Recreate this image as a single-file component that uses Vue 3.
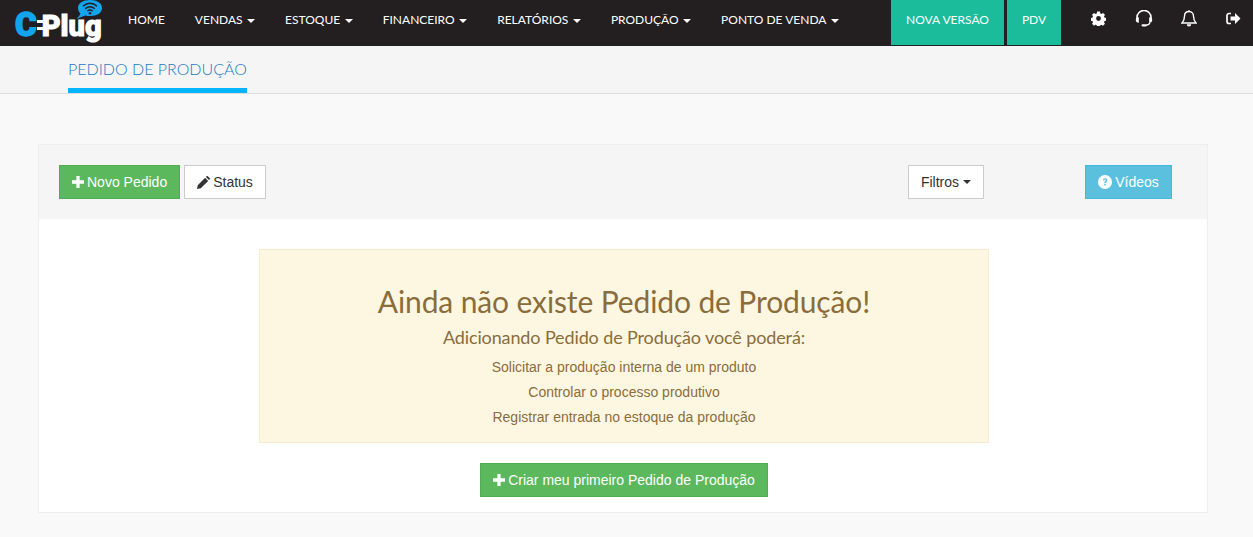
<template>
  <div class="page">
    <header class="topbar">
      <a class="logo">
        <span class="logo-c">C</span><span class="logo-dash"><i></i><i></i></span><span class="logo-plug">Plug</span>
        <svg class="logo-wifi" viewBox="0 0 30 20" width="30" height="20">
          <path d="M16 0c7 0 12 3 12 8s-5 8-12 8c-1.800 0-3.400-.2-4.800-.6L2 19c2.200-1.500 3.600-3.200 4.400-5.500C5 12.200 4 10.300 4 8c0-5 5-8 12-8z" fill="#12a5ee" />
          <path d="M9 6.200c4.200-3.800 10-3.800 14 0M11.200 8.800c2.900-2.500 6.700-2.500 9.600 0M13.300 11c1.700-1.300 3.700-1.300 5.400 0" fill="none" stroke="#231f20" stroke-width="1.500" />
          <circle cx="16" cy="13.200" r="1.300" fill="#231f20" />
        </svg>
      </a>
      <nav class="menu">
        <a v-for="item in menu" :key="item.label" class="menu-item">
          {{ item.label }}<span v-if="item.caret" class="caret"></span>
        </a>
      </nav>
      <a class="teal teal-wide">NOVA VERSÃO</a>
      <a class="teal teal-small">PDV</a>
      <div class="tools">
        <svg width="15" height="15" viewBox="0 0 16 16">
          <path fill="#fff" fill-rule="evenodd" d="M6.500.6h3l.4 2 1.200.5 1.700-1.100 2.100 2.100-1.100 1.700.5 1.200 2 .4v3l-2 .4-.5 1.200 1.100 1.700-2.100 2.100-1.700-1.100-1.200.5-.4 2h-3l-.4-2-1.200-.5-1.700 1.100-2.100-2.100 1.100-1.700-.5-1.200-2-.4v-3l2-.4.5-1.200L1.100 4.100l2.100-2.100 1.700 1.100 1.200-.5zM8 5.400a2.600 2.600 0 1 0 0 5.200 2.600 2.600 0 0 0 0-5.200z" />
        </svg>
        <svg width="18" height="17" viewBox="0 0 18 17">
          <path d="M2 9V7.500a7 7 0 0 1 14 0V9" fill="none" stroke="#fff" stroke-width="1.600" />
          <path d="M3.800 7.200C1.600 7.200.8 8.400.8 10s.8 2.800 3 2.800z" fill="#fff" />
          <path d="M14.200 7.200c2.200 0 3 1.200 3 2.800s-.8 2.800-3 2.800z" fill="#fff" />
          <path d="M15 12.500c-.4 1.600-1.800 2.500-4 2.700" fill="none" stroke="#fff" stroke-width="1.100" />
          <rect x="6.500" y="14.200" width="5.500" height="2.200" rx="1.100" fill="#fff" />
        </svg>
        <svg width="16" height="17" viewBox="0 0 16 17">
          <path d="M8 1.500c2.900 0 4.500 2 4.500 4.800 0 3.500 1 5 2.500 6.700H1c1.500-1.700 2.500-3.200 2.500-6.700C3.500 3.500 5.100 1.500 8 1.500z" fill="none" stroke="#fff" stroke-width="1.400" />
          <circle cx="8" cy="1.300" r="1" fill="#fff" />
          <path d="M5.800 14.200a2.200 2.200 0 0 0 4.400 0z" fill="#fff" />
        </svg>
        <svg width="15" height="13" viewBox="0 0 15 13">
          <path d="M5 1.500H3A2 2 0 0 0 1 3.500v6a2 2 0 0 0 2 2h2" fill="none" stroke="#fff" stroke-width="1.700" />
          <path d="M4.500 4.500H9V1l5.500 5.500L9 12V8.500H4.500z" fill="#fff" />
        </svg>
      </div>
    </header>

    <div class="subnav">
      <a class="tab">PEDIDO DE PRODUÇÃO</a>
    </div>

    <main class="content">
      <section class="panel">
        <div class="panel-head">
          <div class="group">
            <button class="btn btn-green">
              <svg class="ico" width="12" height="12" viewBox="0 0 11 11"><path d="M4 0h3v4h4v3H7v4H4V7H0V4h4z" fill="#fff" /></svg>
              Novo Pedido
            </button>
            <button class="btn btn-white">
              <svg class="ico" width="13" height="13" viewBox="0 0 12 12"><path d="M0 12l.7-3.500 6.800-6.800 2.800 2.800-6.800 6.800zM8.200 1L9 .2c.3-.3.700-.3 1 0l1.800 1.800c.3.300.3.700 0 1l-.8.800z" fill="#333" /></svg>
              Status
            </button>
          </div>
          <button class="btn btn-white filtros">Filtros <span class="caret dark"></span></button>
          <button class="btn btn-blue">
            <svg class="ico" width="14" height="14" viewBox="0 0 14 14">
              <circle cx="7" cy="7" r="7" fill="#fff" />
              <path d="M4.700 5.300C4.900 4 5.800 3.300 7.100 3.300c1.400 0 2.300.8 2.300 1.900 0 1.800-1.700 1.700-1.700 3.100H6.200c0-2.200 1.600-2 1.600-3 0-.4-.3-.7-.8-.7-.5 0-.8.300-.9.900zM6.200 9h1.500v1.600H6.200z" fill="#5bc0de" />
            </svg>
            Vídeos
          </button>
        </div>
        <div class="panel-body">
          <div class="notice">
            <h2>Ainda não existe Pedido de Produção!</h2>
            <h3>Adicionando Pedido de Produção você poderá:</h3>
            <p v-for="line in lines" :key="line">{{ line }}</p>
          </div>
          <button class="btn btn-green btn-create">
            <svg class="ico" width="12" height="12" viewBox="0 0 11 11"><path d="M4 0h3v4h4v3H7v4H4V7H0V4h4z" fill="#fff" /></svg>
            Criar meu primeiro Pedido de Produção
          </button>
        </div>
      </section>
    </main>
  </div>
</template>

<script setup>
const menu = [
  { label: 'HOME' },
  { label: 'VENDAS', caret: true },
  { label: 'ESTOQUE', caret: true },
  { label: 'FINANCEIRO', caret: true },
  { label: 'RELATÓRIOS', caret: true },
  { label: 'PRODUÇÃO', caret: true },
  { label: 'PONTO DE VENDA', caret: true }
]

const lines = [
  'Solicitar a produção interna de um produto',
  'Controlar o processo produtivo',
  'Registrar entrada no estoque da produção'
]
</script>

<style>
html,
body {
  margin: 0;
  background: #f9f9f9;
}
</style>

<style scoped>
.page {
  height: 537px;
  overflow: hidden;
  background: #f9f9f9;
  font-family: 'Liberation Sans', Arial, sans-serif;
  font-size: 14px;
  color: #333;
}

.topbar {
  display: flex;
  height: 46px;
  background: #231f20;
  font-family: Lato, sans-serif;
  font-size: 12px;
  color: #fff;
}

.logo {
  position: relative;
  display: flex;
  align-items: baseline;
  width: 128px;
  height: 46px;
  padding: 0 0 0 15px;
  box-sizing: border-box;
  font-family: Roboto, sans-serif;
  font-weight: 900;
  line-height: 49px;
}

.logo-c {
  font-size: 33px;
  color: #12a5ee;
  -webkit-text-stroke: 1.4px #12a5ee;
}

.logo-dash {
  display: flex;
  flex-direction: column;
  gap: 4px;
  align-self: center;
  padding-top: 3px;
}

.logo-dash i {
  display: block;
  width: 6px;
  height: 3px;
  background: #fff;
}

.logo-plug {
  margin-left: -1px;
  font-size: 29px;
  letter-spacing: 0;
  color: #fff;
  -webkit-text-stroke: 1px #fff;
}

.logo-wifi {
  position: absolute;
  left: 74px;
  top: 0;
}

.menu {
  display: flex;
  align-items: center;
  gap: 30px;
  width: 763px;
  height: 39px;
}

.menu-item {
  white-space: nowrap;
}

.caret {
  display: inline-block;
  margin-left: 4.500px;
  vertical-align: middle;
  border-top: 4px solid #fff;
  border-right: 4px solid transparent;
  border-left: 4px solid transparent;
}

.caret.dark {
  margin-left: 0;
  border-top-color: #333;
}

.teal {
  display: flex;
  align-items: center;
  justify-content: center;
  height: 45px;
  padding-bottom: 6px;
  box-sizing: border-box;
  background: #1abc9c;
  white-space: nowrap;
}

.teal-wide {
  width: 113px;
  margin-right: 3px;
}

.teal-small {
  width: 54px;
}

.tools {
  display: flex;
  align-items: center;
  flex: 1;
  justify-content: space-between;
  padding: 0 12px 10px 30px;
}

.subnav {
  height: 47px;
  padding-left: 68px;
  background: #f5f5f5;
  border-bottom: 1px solid #ddd;
}

.tab {
  display: inline-block;
  height: 42px;
  line-height: 46px;
  border-bottom: 5px solid #00b4ff;
  font-family: Lato, sans-serif;
  font-size: 16px;
  font-weight: 300;
  color: #1c7ac4;
  white-space: nowrap;
}

.content {
  padding: 50px 45px 0 38px;
}

.panel {
  background: #fff;
  border: 1px solid #eee;
}

.panel-head {
  display: flex;
  align-items: flex-start;
  height: 74px;
  padding: 20px 35px 0 20px;
  box-sizing: border-box;
  background: #f5f5f5;
}

.group {
  display: flex;
  gap: 4px;
  width: 849px;
}

.btn {
  display: inline-flex;
  align-items: center;
  justify-content: center;
  gap: 3px;
  height: 34px;
  padding: 0 12px;
  box-sizing: border-box;
  border: 1px solid transparent;
  font-family: inherit;
  font-size: 14px;
  white-space: nowrap;
}

.btn-green {
  background: #5cb85c;
  border-color: #4cae4c;
  color: #fff;
}

.btn-white {
  background: #fff;
  border-color: #ccc;
  color: #333;
}

.filtros {
  width: 76px;
  gap: 4px;
}

.btn-blue {
  background: #5bc0de;
  border-color: #46b8da;
  color: #fff;
  width: 87px;
  margin-left: 101px;
}

.panel-body {
  display: flex;
  flex-direction: column;
  align-items: center;
  height: 293px;
  padding: 30px 0 0 2px;
  box-sizing: border-box;
}

.notice {
  width: 730px;
  height: 194px;
  padding-top: 33px;
  box-sizing: border-box;
  background: #fdf7e2;
  border: 1px solid #faebcc;
  color: #8a6d3b;
  text-align: center;
}

.notice h2 {
  margin: 0;
  font-family: Lato, sans-serif;
  font-size: 30px;
  font-weight: 400;
  letter-spacing: -0.12px;
  line-height: 36px;
}

.notice h3 {
  margin: 8px 0 8px;
  font-family: Lato, sans-serif;
  font-size: 18px;
  font-weight: 400;
  letter-spacing: -0.12px;
  line-height: 20px;
}

.notice p {
  margin: 0;
  line-height: 25px;
}

.btn-create {
  margin-top: 20px;
}
</style>
